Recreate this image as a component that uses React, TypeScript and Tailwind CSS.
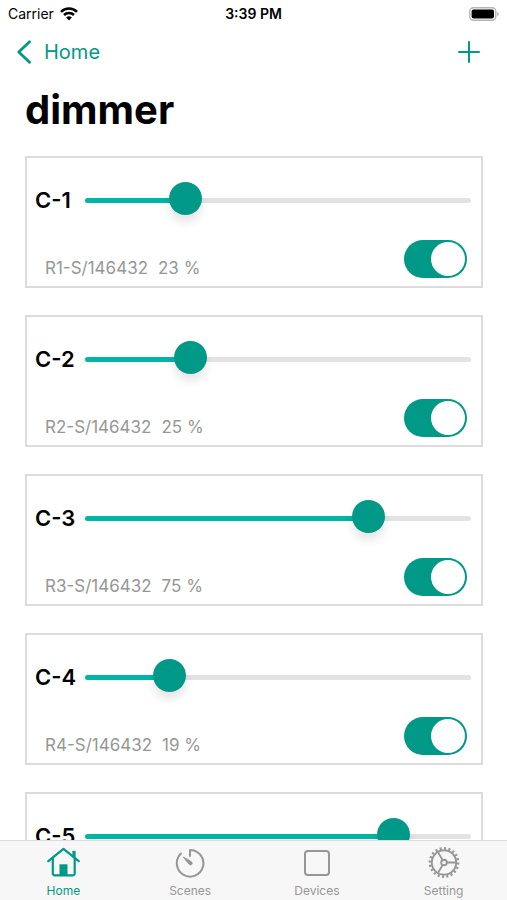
import React, { useState } from 'react';

const dimmers = [
  { name: 'C-1', address: 'R1-S/146432', level: 23.9 },
  { name: 'C-2', address: 'R2-S/146432', level: 25.1 },
  { name: 'C-3', address: 'R3-S/146432', level: 75.5 },
  { name: 'C-4', address: 'R4-S/146432', level: 19.2 },
  { name: 'C-5', address: 'R5-S/146432', level: 82.7 },
];

function HomeIcon() {
  return (
    <svg width="34" height="32" viewBox="0 0 34 32" fill="none" stroke="currentColor" strokeWidth="2.2" strokeLinecap="round" strokeLinejoin="round">
      <path d="M2.3 15.200 17.500 2.800l15.200 12.400" />
      <path d="M6.8 12v15.500a1.8 1.8 0 0 0 1.8 1.8h18.300a1.8 1.8 0 0 0 1.8-1.8V12" />
      <path d="M28 11.500V4.800" strokeWidth="3.2" strokeLinecap="butt" />
      <path d="M13.500 29.500V18.300h8v11.200z" fill="currentColor" stroke="none" />
    </svg>
  );
}

function ScenesIcon() {
  return (
    <svg width="34" height="32" viewBox="0 0 34 32" fill="none" stroke="currentColor" strokeWidth="2" strokeLinecap="round" strokeLinejoin="round">
      <path d="M17 10V4A13.3 13.3 0 1 1 8 7.6" />
      <path d="M10.6 11.2c2.900 1.300 5.700 2.900 8.300 5a1.7 1.7 0 0 1-2.200 2.500c-2.400-2.300-4.400-4.800-6.100-7.500z" fill="currentColor" strokeWidth="0.8" />
    </svg>
  );
}

function DevicesIcon() {
  return (
    <svg width="34" height="32" viewBox="0 0 34 32" fill="none" stroke="currentColor" strokeWidth="2">
      <rect x="5" y="5" width="24" height="24" rx="3" />
    </svg>
  );
}

function SettingIcon() {
  return (
    <svg width="34" height="32" viewBox="0 0 34 32" fill="none" stroke="currentColor" strokeWidth="1.9">
      <circle cx="17" cy="16.5" r="12.2" />
      <circle cx="17" cy="16.5" r="14.1" strokeWidth="2.6" pathLength="60" strokeDasharray="1.4 1.6" />
      <circle cx="17" cy="16.5" r="2.8" />
      <path d="M19.8 16.5h9.4M15.6 14.1 10.9 5.9M15.6 18.9l-4.7 8.2" />
    </svg>
  );
}

const tabs = [
  { label: 'Home', Icon: HomeIcon },
  { label: 'Scenes', Icon: ScenesIcon },
  { label: 'Devices', Icon: DevicesIcon },
  { label: 'Setting', Icon: SettingIcon },
];

function DimmerCard({ name, address, level: initial }: { name: string, address: string, level: number }) {
  const [level, setLevel] = useState(initial);
  const [on, setOn] = useState(true);

  return (
    <li className="flex h-33 flex-col justify-between border-2 border-[#dcdcdc] pt-6 pr-2.5 pb-2 pl-2">
      <label className="flex items-center">
        <span className="w-[50px] shrink-0 text-[22px] leading-9 font-semibold text-black">{name}</span>
        <input
          type="range"
          min="0"
          max="100"
          step="0.1"
          value={level}
          onChange={(e) => setLevel(Number(e.target.value))}
          style={{ '--level': `${level}%` } as React.CSSProperties}
          className="h-9 min-w-0 flex-1 appearance-none bg-transparent [&::-webkit-slider-runnable-track]:h-[5px] [&::-webkit-slider-runnable-track]:rounded-full [&::-webkit-slider-runnable-track]:bg-[linear-gradient(to_right,#00b5a5_var(--level),#e3e3e3_var(--level))] [&::-webkit-slider-thumb]:-mt-4 [&::-webkit-slider-thumb]:size-[33px] [&::-webkit-slider-thumb]:appearance-none [&::-webkit-slider-thumb]:rounded-full [&::-webkit-slider-thumb]:bg-[#009987] [&::-webkit-slider-thumb]:shadow-[0_7px_10px_rgba(0,0,0,0.1)]"
        />
      </label>
      <div className="flex items-center justify-between pr-1 pl-2.5">
        <p className="flex gap-2.5 pt-[18px] text-[17px] leading-5 text-[#969696]">
          <span>{address}</span>
          <span>{Math.floor(level)} %</span>
        </p>
        <input
          type="checkbox"
          role="switch"
          aria-label={`${name} power`}
          checked={on}
          onChange={(e) => setOn(e.target.checked)}
          className="flex h-[38px] w-[63px] appearance-none items-center rounded-full bg-[#e3e3e3] px-0.5 before:size-[34px] before:rounded-full before:bg-white checked:justify-end checked:bg-[#009987]"
        />
      </div>
    </li>
  );
}

export default function App() {
  const [active, setActive] = useState('Home');

  return (
    <div className="flex h-screen flex-col bg-white font-[Inter,'Liberation_Sans',sans-serif]">
      {/* Status bar */}
      <div className="grid h-7 shrink-0 grid-cols-3 items-center px-2 text-sm text-black">
        <div className="flex items-center gap-1.5">
          <span>Carrier</span>
          <svg width="18" height="14" viewBox="0 0 18 14" fill="none" stroke="currentColor" strokeWidth="2.5">
            <path d="M1 4.9a11.3 11.3 0 0 1 16 0" />
            <path d="M4 8a7.1 7.1 0 0 1 10 0" />
            <path d="M9 13.6 6.1 10.6a4.1 4.1 0 0 1 5.8 0z" fill="currentColor" stroke="none" />
          </svg>
        </div>
        <span className="text-center font-semibold">3:39 PM</span>
        <svg className="justify-self-end" width="30" height="14" viewBox="0 0 30 14">
          <rect x="0.8" y="0.8" width="26" height="12.4" rx="3.6" fill="#fff" stroke="#b5b5b5" strokeWidth="1.4" />
          <rect x="2.6" y="2.6" width="22.4" height="8.8" rx="1.8" fill="#000" />
          <path d="M28.2 5v4c1-.3 1.6-1.1 1.6-2s-.6-1.7-1.6-2z" fill="#b5b5b5" />
        </svg>
      </div>

      {/* Navigation bar */}
      <header className="flex h-12 shrink-0 items-center justify-between pr-6 pl-4 text-[#009987]">
        <a href="#home" className="flex items-center gap-3 text-xl">
          <svg width="16" height="24" viewBox="0 0 16 24" fill="none" stroke="currentColor" strokeWidth="2.8" strokeLinecap="round" strokeLinejoin="round">
            <path d="M13.5 1.8 2.8 12l10.7 10.2" />
          </svg>
          Home
        </a>
        <button type="button" aria-label="Add dimmer">
          <svg width="28" height="24" viewBox="0 0 28 24" stroke="currentColor" strokeWidth="2" strokeLinecap="round">
            <path d="M14 2v20M4 12h20" />
          </svg>
        </button>
      </header>

      <main className="min-h-0 flex-1 overflow-y-auto px-6 pt-2.5 pb-7 [scrollbar-width:none]">
        <h1 className="px-px text-[40px] leading-12 font-bold text-black">dimmer</h1>
        <ul className="mt-[22px] flex flex-col gap-[27px] pl-px">
          {dimmers.map((dimmer) => (
            <DimmerCard key={dimmer.name} {...dimmer} />
          ))}
        </ul>
      </main>

      {/* Tab bar */}
      <nav className="grid h-15 shrink-0 grid-cols-4 border-t border-[#dcdcdc] bg-[#f7f7f7]">
        {tabs.map(({ label, Icon }) => (
          <button
            key={label}
            type="button"
            onClick={() => setActive(label)}
            className={`flex flex-col items-center gap-[5px] pt-[5px] text-xs ${active === label ? 'text-[#009987]' : 'text-[#969696]'}`}
          >
            <Icon />
            {label}
          </button>
        ))}
      </nav>
    </div>
  );
}
